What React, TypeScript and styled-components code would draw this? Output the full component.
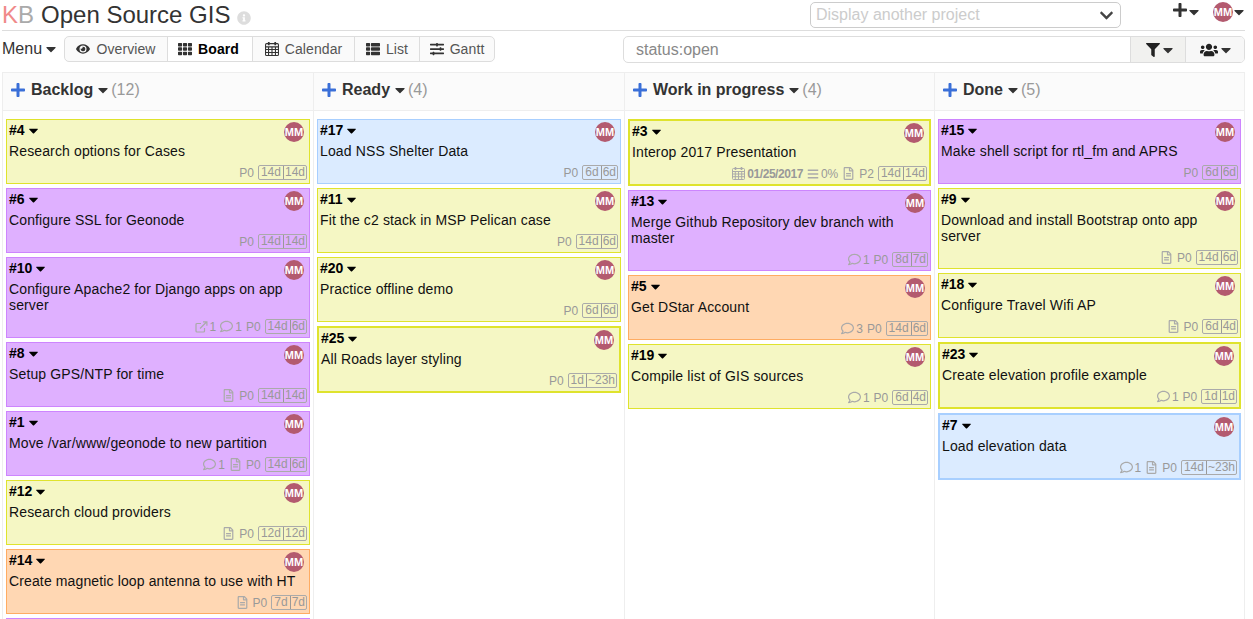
import React from 'react';
import styled, { createGlobalStyle } from 'styled-components';
import { FaCaretDown, FaEye, FaTh, FaThList, FaSlidersH, FaFilter, FaUsers, FaPlus, FaInfoCircle, FaChevronDown, FaRegFileAlt, FaRegComment, FaBars } from 'react-icons/fa';

const Global = createGlobalStyle`
  html, body { margin: 0; padding: 0; background: #fff; overflow: hidden; height: 619px; }
  body { font-family: "Liberation Sans", Arial, sans-serif; color: #333; font-size: 14px; }
  * { box-sizing: border-box; }
`;

type Kind = 'y' | 'p' | 'b' | 'o';
const bg: Record<Kind, string> = { y: '#f5f7c4', p: '#dfb0ff', b: '#dbebff', o: '#ffd7b3' };
const bd: Record<Kind, string> = { y: '#dfe32d', p: '#cd85fe', b: '#a8cfff', o: '#ffac62' };

const Page = styled.div`
  width: 1253px; height: 619px; overflow: hidden; display: flex; flex-direction: column;
`;
const Header = styled.header`
  flex: none; height: 31px; margin: 0 8px 0 2px; border-bottom: 1px solid #ddd; display: flex; align-items: flex-start;
`;
const Title = styled.h1`
  flex: none; margin: 0; width: 808px; font-size: 24px; font-weight: 400; line-height: 30px; height: 30px; color: #333; white-space: nowrap; display: flex; align-items: center;
`;
const Logo = styled.span`
  margin-right: 7px; color: #aaa; & b { font-weight: 400; color: #f08a8a; }
`;
const InfoIcon = styled(FaInfoCircle)`
  color: #ddd; font-size: 14px; margin: 5px 0 0 7px;
`;
const ProjectPicker = styled.div`
  flex: none; width: 311px; height: 26px; margin-top: 2px; border: 1px solid #ccc; border-radius: 5px; display: flex; align-items: center; justify-content: space-between; padding: 0 6px 0 5px; color: #ccc; font-size: 16px;
  & svg { color: #444; font-size: 15px; }
`;
const HeaderRight = styled.div`
  flex: none; display: flex; align-items: center; margin-left: 51px; height: 24px; color: #333;
`;
const PlusIcon = styled(FaPlus)`
  color: #333; font-size: 16px; margin-top: -4px;
`;
const SmallCaret = styled(FaCaretDown)`
  font-size: 16px; color: #333; flex: none; margin-left: -2px;
`;
const SearchCaret = styled(FaCaretDown)`
  font-size: 16px; color: #333; flex: none;
`;
const HeaderAvatar = styled.span`
  width: 20px; height: 20px; border-radius: 50%; background: #b35a6f; color: #fff; font-size: 11px; font-weight: 700; line-height: 20px; text-align: center; margin-left: 11px; white-space: nowrap; flex: none; display: flex; justify-content: center;
`;
const Toolbar = styled.div`
  flex: none; height: 41px; display: flex; align-items: flex-start; padding: 5px 8px 0 2px;
`;
const MenuBtn = styled.div`
  flex: none; width: 62px; height: 26px; font-size: 16px; line-height: 26px; display: flex; align-items: center; color: #333;
  & svg { font-size: 16px; margin-left: 1px; flex: none; }
`;
const Views = styled.ul`
  flex: none; list-style: none; margin: 0; padding: 0; display: flex; height: 26px; width: 431px; border: 1px solid #ddd; border-radius: 5px; background: #fafafa;
`;
const View = styled.li<{ $w: number; $active?: boolean }>`
  width: ${p => p.$w}px; height: 24px; display: flex; align-items: center; justify-content: center; gap: 6px; font-size: 14px; letter-spacing: 0.1px; color: ${p => p.$active ? '#000' : '#555'}; font-weight: ${p => p.$active ? 700 : 400}; background: ${p => p.$active ? '#fff' : 'transparent'};
  padding-right: ${p => p.$active ? 3 : 0}px;
  border-right: 1px solid #ddd;
  &:last-child { border-right: 0; }
  & svg { color: #333; font-size: 14px; flex: none; }
`;
const Search = styled.div`
  flex: none; margin: 0 0 0 128px; width: 622px; height: 27px; border: 1px solid #ddd; border-radius: 5px; display: flex; overflow: hidden;
`;
const SearchInput = styled.div`
  flex: 1; font-size: 16px; color: #888; line-height: 25px; padding-left: 12px;
`;
const SearchBtn = styled.div<{ $w: number; $pad: number; $shade?: boolean; $icon: number }>`
  flex: none; width: ${p => p.$w}px; background: ${p => p.$shade ? '#f1f1ef' : '#f7f7f7'}; border-left: 1px solid #ddd; display: flex; align-items: center; padding-left: ${p => p.$pad}px; color: #222;
  & svg:first-child { font-size: ${p => p.$icon}px; }
`;
const Board = styled.div`
  margin: 0 8px 0 2px; flex: 1; min-height: 0; display: grid; grid-template-columns: 311px 311px 310px 310px; border-top: 1px solid #eee; border-left: 1px solid #eee;
`;
const Column = styled.section`
  border-right: 1px solid #eee; min-width: 0; height: 546px; overflow: hidden;
`;
const ColHead = styled.div`
  height: 38px; background: #fbfbfb; border-bottom: 1px solid #eee; display: flex; align-items: center; padding: 0 0 4px 7px; font-size: 16px; color: #333; white-space: nowrap;
`;
const ColPlus = styled(FaPlus)`
  color: #3a6fd8; font-size: 16px; margin-right: 5px;
`;
const ColName = styled.span`
  font-weight: 700; margin-right: 2px;
`;
const ColCaret = styled(FaCaretDown)`
  font-size: 16px; color: #333;
`;
const ColCount = styled.span`
  color: #999;
`;
const Cards = styled.div`
  padding: 8px 3px 0 3px; display: flex; flex-direction: column; gap: 4px;
`;
const Card = styled.article<{ $k: Kind; $thick?: boolean }>`
  position: relative; flex: none; background: ${p => bg[p.$k]}; border: ${p => p.$thick ? 2 : 1}px solid ${p => bd[p.$k]}; padding: 2px; min-height: ${p => p.$thick ? 67 : 65}px; display: flex; flex-direction: column; color: #000;
`;
const CardHead = styled.div`
  height: 16px; font-size: 14px; font-weight: 700; line-height: 16px; color: #000; display: flex; align-items: center; gap: 1px;
  & svg { font-size: 15px; color: #000; }
`;
const Avatar = styled.span`
  position: absolute; top: 2px; right: 5px; width: 20px; height: 20px; border-radius: 50%; background: #b35a6f; color: #fff; font-size: 11px; font-weight: 700; line-height: 20px; white-space: nowrap; display: flex; justify-content: center;
`;
const CardTitle = styled.div`
  margin-top: 5px; font-size: 14px; letter-spacing: 0.13px; line-height: 16px; color: #111; flex: 1;
`;
const CardFoot = styled.div`
  height: 17px; display: flex; justify-content: flex-end; align-items: center; gap: 4px; font-size: 12px; color: #999; white-space: nowrap; margin-top: 5px;
  & svg { font-size: 13px; color: #aaa; flex: none; }
`;
const Meta = styled.span<{ $bold?: boolean }>`
  font-weight: ${p => p.$bold ? 700 : 400}; display: inline-flex; align-items: center; gap: 2px; letter-spacing: ${p => p.$bold ? '-0.45px' : 0};
`;
const BarsIcon = styled(FaBars)`
  && { font-size: 12px; }
`;
const Times = styled.span`
  display: inline-flex; height: 15px; border: 1px solid #aaa; border-radius: 2px; line-height: 13px; color: #999;
  & span { padding: 0 2px; }
  & span + span { border-left: 1px solid #999; padding: 0 1px; }
`;

type CardData = { n: number; k: Kind; t: string; thick?: boolean; link?: boolean; c?: number; f?: boolean; p?: string; e: string; s: string; date?: boolean };
const cols: { name: string; count: number; cards: CardData[] }[] = [
  { name: 'Backlog', count: 12, cards: [
    { n: 4, k: 'y', t: 'Research options for Cases', e: '14d', s: '14d' },
    { n: 6, k: 'p', t: 'Configure SSL for Geonode', e: '14d', s: '14d' },
    { n: 10, k: 'p', t: 'Configure Apache2 for Django apps on app server', link: true, c: 1, e: '14d', s: '6d' },
    { n: 8, k: 'p', t: 'Setup GPS/NTP for time', f: true, e: '14d', s: '14d' },
    { n: 1, k: 'p', t: 'Move /var/www/geonode to new partition', c: 1, f: true, e: '14d', s: '6d' },
    { n: 12, k: 'y', t: 'Research cloud providers', f: true, e: '12d', s: '12d' },
    { n: 14, k: 'o', t: 'Create magnetic loop antenna to use with HT', f: true, e: '7d', s: '7d' },
  ]},
  { name: 'Ready', count: 4, cards: [
    { n: 17, k: 'b', t: 'Load NSS Shelter Data', e: '6d', s: '6d' },
    { n: 11, k: 'y', t: 'Fit the c2 stack in MSP Pelican case', e: '14d', s: '6d' },
    { n: 20, k: 'y', t: 'Practice offline demo', e: '6d', s: '6d' },
    { n: 25, k: 'y', t: 'All Roads layer styling', thick: true, e: '1d', s: '~23h' },
  ]},
  { name: 'Work in progress', count: 4, cards: [
    { n: 3, k: 'y', t: 'Interop 2017 Presentation', thick: true, date: true, f: true, p: 'P2', e: '14d', s: '14d' },
    { n: 13, k: 'p', t: 'Merge Github Repository dev branch with master', c: 1, e: '8d', s: '7d' },
    { n: 5, k: 'o', t: 'Get DStar Account', c: 3, e: '14d', s: '6d' },
    { n: 19, k: 'y', t: 'Compile list of GIS sources', c: 1, e: '6d', s: '4d' },
  ]},
  { name: 'Done', count: 5, cards: [
    { n: 15, k: 'p', t: 'Make shell script for rtl_fm and APRS', e: '6d', s: '6d' },
    { n: 9, k: 'y', t: 'Download and install Bootstrap onto app server', f: true, e: '14d', s: '6d' },
    { n: 18, k: 'y', t: 'Configure Travel Wifi AP', f: true, e: '6d', s: '4d' },
    { n: 23, k: 'y', t: 'Create elevation profile example', thick: true, c: 1, e: '1d', s: '1d' },
    { n: 7, k: 'b', t: 'Load elevation data', thick: true, c: 1, f: true, e: '14d', s: '~23h' },
  ]},
];

const LinkIcon = () => (
  <svg width="13" height="12" viewBox="0 0 13 12" fill="none" stroke="#aaa" strokeWidth="1.2">
    <path d="M6 2.5H2a1 1 0 0 0-1 1V10a1 1 0 0 0 1 1h6.5a1 1 0 0 0 1-1V7" />
    <path d="M5 7.5 11.5 1M8 .9h3.9v3.9" />
  </svg>
);

const CalendarIcon = ({ size = 13 }: { size?: number }) => (
  <svg width={size} height={size} viewBox="0 0 13 13" fill="none" stroke="currentColor" strokeWidth="1">
    <rect x="0.5" y="1.5" width="12" height="11" rx="1" />
    <path d="M.5 4.5h12M.5 7h12M.5 9.7h12M3.3 4.5v8M6.5 4.5v8M9.7 4.5v8" />
    <path d="M3.5 0v3M9.5 0v3" strokeWidth="1.6" />
  </svg>
);

const CardView = ({ d }: { d: CardData }) => (
  <Card $k={d.k} $thick={d.thick}>
    <CardHead>#{d.n}<FaCaretDown /></CardHead>
    <Avatar>MM</Avatar>
    <CardTitle>{d.t}</CardTitle>
    <CardFoot>
      {d.date && <Meta $bold><CalendarIcon />01/25/2017</Meta>}
      {d.date && <Meta><BarsIcon />0%</Meta>}
      {d.link && <Meta><LinkIcon />1</Meta>}
      {d.c !== undefined && <Meta><FaRegComment />{d.c}</Meta>}
      {d.f && <Meta><FaRegFileAlt /></Meta>}
      <Meta>{d.p ?? 'P0'}</Meta>
      <Times><span>{d.e}</span><span>{d.s}</span></Times>
    </CardFoot>
  </Card>
);

export default function App() {
  return (
    <Page>
      <Global />
      <Header>
        <Title><Logo><b>K</b>B</Logo>Open Source GIS<InfoIcon /></Title>
        <ProjectPicker>Display another project<FaChevronDown /></ProjectPicker>
        <HeaderRight>
          <PlusIcon /><SmallCaret />
          <HeaderAvatar>MM</HeaderAvatar><SmallCaret />
        </HeaderRight>
      </Header>
      <Toolbar>
        <MenuBtn>Menu<FaCaretDown /></MenuBtn>
        <Views>
          <View $w={103}><FaEye />Overview</View>
          <View $w={85} $active><FaTh />Board</View>
          <View $w={102}><CalendarIcon size={14} />Calendar</View>
          <View $w={65}><FaThList />List</View>
          <View $w={74}><FaSlidersH />Gantt</View>
        </Views>
        <Search>
          <SearchInput>status:open</SearchInput>
          <SearchBtn $w={55} $pad={15} $icon={14} $shade><FaFilter /><SearchCaret /></SearchBtn>
          <SearchBtn $w={59} $pad={14} $icon={18}><FaUsers /><SearchCaret /></SearchBtn>
        </Search>
      </Toolbar>
      <Board>
        {cols.map(c => (
          <Column key={c.name}>
            <ColHead><ColPlus /><ColName>{c.name}</ColName><ColCaret /><ColCount>({c.count})</ColCount></ColHead>
            <Cards>
              {c.cards.map(d => <CardView key={d.n} d={d} />)}
              {c.name === 'Backlog' && <Card $k="p" />}
            </Cards>
          </Column>
        ))}
      </Board>
    </Page>
  );
}
